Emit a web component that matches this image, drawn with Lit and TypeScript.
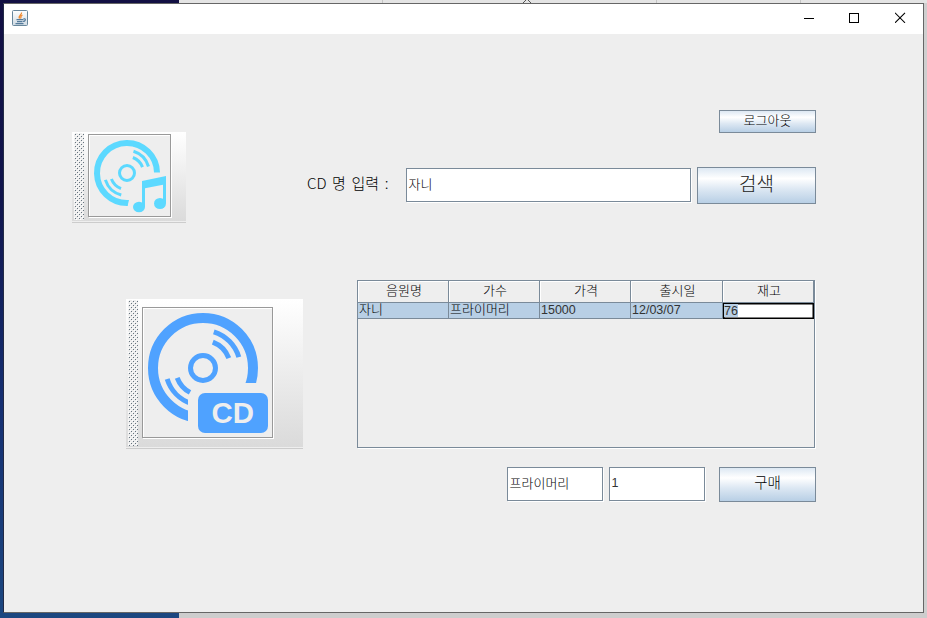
import { LitElement, html, svg, css } from "lit";
import { customElement } from "lit/decorators.js";

const columns = ["음원명", "가수", "가격", "출시일", "재고"];
const row = ["자니", "프라이머리", "15000", "12/03/07"];

@customElement("app-root")
export class AppRoot extends LitElement {
  static styles = css`
    :host {
      display: block;
      width: 927px;
      height: 618px;
      overflow: hidden;
      color: #000;
      font-family: "Liberation Sans", "Noto Sans CJK KR", sans-serif;
      font-size: 13px;
      font-weight: 300;
    }
    * { box-sizing: border-box; }
    .desktop {
      width: 927px;
      height: 618px;
      padding: 3px 3px 5px;
      background:
        linear-gradient(90deg, transparent 179px, #cdcdcd 179px) 0 613px / 927px 5px no-repeat,
        linear-gradient(90deg, transparent 179px, #e4e4e4 179px, #e4e4e4 382px, #c4c4c4 382px, #c4c4c4 383px, #e4e4e4 383px, #e4e4e4 656px, #c4c4c4 656px, #c4c4c4 657px, #e4e4e4 657px, #e4e4e4 800px, #c4c4c4 800px, #c4c4c4 801px, #e4e4e4 801px) 0 0 / 927px 3px no-repeat,
        linear-gradient(90deg, transparent 924px, #cfcfcf 924px),
        linear-gradient(#120f43, #10154d 200px, #152f72 400px, #1c4780 618px);
    }
    .caret { position: absolute; left: 523px; top: 0; }
    .window {
      height: 610px;
      border: 1px solid #666;
      border-left-color: #222a45;
      background: #eee;
    }
    .titlebar {
      display: flex;
      height: 30px;
      background: #fff;
      justify-content: space-between;
      padding: 6px 17px 0 8px;
    }
    .controls { display: flex; gap: 35px; padding-top: 2px; }
    svg { display: block; }
    .content { display: flex; height: 578px; }
    .side { width: 303px; padding: 98px 0 0 68px; }
    .main { flex: 1; padding: 76px 107px 0 0; display: flex; flex-direction: column; align-items: flex-end; }
    .toolbar {
      display: flex;
      background: linear-gradient(#fff, #dadada);
      border-bottom: 1px solid #ccc;
      box-shadow: inset 0 -1px #eee;
    }
    .music { width: 114px; height: 91px; padding: 1px 0 0 2px; }
    .disc { width: 177px; height: 150px; margin: 76px 0 0 54px; padding: 1px 0 0 2px; }
    .grip { flex: none; }
    .tile { background: #eee; border: 1px solid #999; box-shadow: inset 1px 1px #fff, 1px 1px #fff; }
    .music .tile { width: 83px; height: 83px; margin: 1px 0 0 4px; }
    .disc .tile { width: 131px; height: 131px; margin: 7px 0 0 4px; }
    .button {
      display: flex;
      justify-content: center;
      border: 1px solid #7a8a99;
      background: linear-gradient(#dde8f3, #fff 30%, #dde8f3 60%, #b8cfe5);
      white-space: nowrap;
    }
    .logout { width: 97px; height: 23px; line-height: 19px; }
    .searchrow { display: flex; margin-top: 34px; height: 37px; }
    .label { width: 99px; line-height: 32px; font-family: "Noto Sans CJK KR", sans-serif; font-size: 15px; white-space: pre; word-spacing: 2.3px; }
    .field {
      height: 34px;
      margin-top: 1px;
      border: 1px solid #7a8a99;
      background: #fff;
      box-shadow: 1px 1px #fff;
      padding-left: 1.5px;
      line-height: 31px;
      white-space: nowrap;
    }
    .query { width: 285px; margin-right: 6px; }
    .search { width: 119px; height: 37px; line-height: 33px; font-size: 19px; color: #222; }
    .table { width: 458px; height: 168px; margin-top: 76px; border: 1px solid #7a8a99; box-shadow: 1px 1px #fff; margin-right: 1px; }
    .line { display: grid; grid-template-columns: 91px 91px 91px 92px 91px; }
    .head { height: 22px; border-bottom: 1px solid #7a8a99; }
    .th { text-align: center; padding-left: 2px; line-height: 20px; border-right: 1px solid #7a8a99; box-shadow: inset 1px 1px #fff; }
    .td { height: 16px; line-height: 14px; padding-left: 1px; background: #b8cfe5; border-right: 1px solid #7a8a99; border-bottom: 1px solid #7a8a99; white-space: nowrap; }
    .num { font-size: 12.5px; color: #333; }
    .editor { height: 16px; width: 91px; border: 1px solid #000; box-shadow: inset 0 0 0 0.5px #000; background: #fff; line-height: 14px; }
    .sel { display: inline-block; height: 13px; background: #b8cfe5; }
    .buyrow { display: flex; margin-top: 19px; }
    .buyrow .field { width: 96px; margin: 0 6px 0 0; }
    .buy { width: 97px; height: 35px; margin-left: 8px; line-height: 30px; font-size: 14.5px; }
    .badge { font: bold 29px "Liberation Sans", sans-serif; }
  `;

  private grip(height: number, id: string) {
    return html`<svg class="grip" width="10" height=${height} shape-rendering="crispEdges">
      <defs><pattern id=${id} width="4" height="4" patternUnits="userSpaceOnUse">
        <rect width="4" height="4" fill="#eee" />
        <path d="M1 1h1v1h-1zM3 3h1v1h-1z" fill="#66747f" />
        <path d="M2 2h1v1h-1zM0 0h1v1h-1z" fill="#fff" />
      </pattern></defs>
      <rect width="10" height=${height} fill="url(#${id})" />
    </svg>`;
  }

  // Strokes shared by both discs, centred on the origin.
  private grooves() {
    return svg`<circle r="12.5" stroke-width="5" />
      <path stroke-width="5" d="M10.8 -36.2A38 38 0 0 1 35.8 -10.9M9.8 -25.8A27.6 27.6 0 0 1 25.8 -9.8" />`;
  }

  render() {
    return html`<div class="desktop">
      <svg class="caret" width="8" height="3"><path d="M0 3 3 0M8 3 5 0" stroke="#555" /></svg>
      <div class="window">
        <div class="titlebar">
          <svg width="16" height="16" viewBox="0 0 16 16">
            <defs><linearGradient id="ic" x2="0" y2="1"><stop stop-color="#fff" /><stop offset="1" stop-color="#cfdae3" /></linearGradient></defs>
            <rect x=".5" y=".5" width="15" height="15" rx="1" fill="url(#ic)" stroke="#68879c" />
            <path d="M9.500 2.500C10 5 6 5.500 7.500 8.500M10.500 5C8 6 9.500 7 8.500 8.500" fill="none" stroke="#f28a2e" stroke-width="1.3" />
            <path d="M4.500 9.700h7M5 11.700h5.500M3.500 13.700h8M11.500 8.500c3 0 2 3-.5 3" fill="none" stroke="#557b9b" stroke-width="1.2" />
          </svg>
          <div class="controls">
            <svg width="11" height="11"><path d="M1 6.500h10" stroke="#000" /></svg>
            <svg width="11" height="11"><rect x=".5" y="1.500" width="9" height="9" fill="none" stroke="#000" /></svg>
            <svg width="11" height="11"><path d="M0 .8 10 10.800M10 .8 0 10.800" stroke="#000" stroke-width="1.1" /></svg>
          </div>
        </div>
        <div class="content">
          <div class="side">
            <div class="toolbar music">
              ${this.grip(87, "dots-a")}
              <div class="tile">
                <svg width="81" height="81" viewBox="89 135 81 81">
                  <g fill="none" stroke="#5cd9ff">
                    <path stroke-width="6" d="M157 172.500A30 30 0 1 0 127.500 203" />
                    <g transform="translate(127 173) scale(.6)">${this.grooves()}
                      <path stroke-width="5" d="M-36 11.500A37.800 37.800 0 0 0 -9.600 36.600M-26 10A28 28 0 0 0 -10 26" />
                    </g>
                  </g>
                  <g fill="#5cd9ff">
                    <path d="M127 200H129L127.500 206H126ZM142 181 166 176V203.300H163V184.700L145 188.300V207H142Z" />
                    <ellipse cx="139" cy="207" rx="6" ry="5.300" />
                    <ellipse cx="160" cy="203.500" rx="6" ry="5.500" />
                  </g>
                </svg>
              </div>
            </div>
            <div class="toolbar disc">
              ${this.grip(146, "dots-b")}
              <div class="tile">
                <svg width="129" height="129" viewBox="143 308 129 129">
                  <defs><clipPath id="cut"><path d="M-61 -61H61V15H-15V61H-61Z" /></clipPath></defs>
                  <g transform="translate(203 368)" fill="none" stroke="#4fa2ff">
                    <g clip-path="url(#cut)">
                      <circle r="50" stroke-width="10" />
                      <path stroke-width="5" d="M-35.800 11A37.500 37.500 0 0 0 -12 35.500" />
                    </g>
                    ${this.grooves()}
                    <path stroke-width="5" d="M-25.800 9.800A27.600 27.600 0 0 0 -13 24.400" />
                  </g>
                  <rect x="198" y="393" width="70" height="40" rx="7" fill="#4fa2ff" />
                  <text class="badge" x="211.500" y="423" textLength="42.500" lengthAdjust="spacingAndGlyphs" fill="#eee">CD</text>
                </svg>
              </div>
            </div>
          </div>
          <div class="main">
            <div class="button logout">로그아웃</div>
            <div class="searchrow">
              <div class="label">CD 명 입력 :</div>
              <div class="field query">자니</div>
              <div class="button search">검색</div>
            </div>
            <div class="table">
              <div class="line head">${columns.map((c) => html`<div class="th">${c}</div>`)}</div>
              <div class="line">
                ${row.map((c, i) => html`<div class="td ${i > 1 ? "num" : ""}">${c}</div>`)}
                <div class="editor num"><span class="sel">76</span></div>
              </div>
            </div>
            <div class="buyrow">
              <div class="field">프라이머리</div>
              <div class="field num">1</div>
              <div class="button buy">구매</div>
            </div>
          </div>
        </div>
      </div>
    </div>`;
  }
}
